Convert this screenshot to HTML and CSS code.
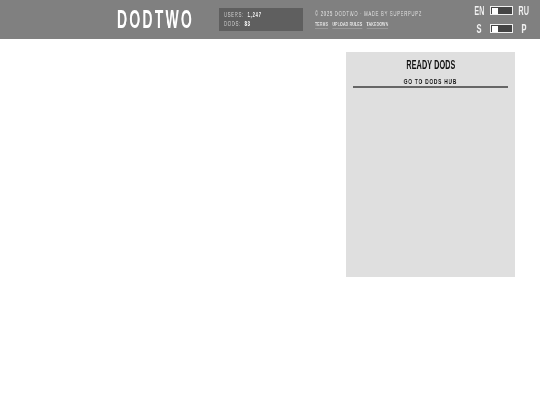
FILE: index.html
```html
<!DOCTYPE html>
<html lang="en">
<head>
  <meta charset="UTF-8">
  <title>DodTwo</title>
  <link rel="stylesheet" href="styles.css">
</head>
<body>

  <!-- Top bar -->
  <header class="topbar">
    <div class="logo"><span class="narrow">DODTWO</span></div>

    <div class="stats">
      <div class="narrow stats-lines">
        <div class="stat"><span class="stat-label">USERS:</span> <span class="stat-value">1,247</span></div>
        <div class="stat"><span class="stat-label">DODS:</span> <span class="stat-value">83</span></div>
      </div>
    </div>

    <div class="info">
      <div class="narrow">
        <div class="copyright">© 2025 DODTWO · MADE BY SUPERPUPZ</div>
        <div class="links">
          <a href="#">TERMS</a>
          <a href="#">UPLOAD RULES</a>
          <a href="#">TAKEDOWN</a>
        </div>
      </div>
    </div>

    <div class="switches">
      <div class="switch-row">
        <span class="switch-label"><span class="narrow">EN</span></span>
        <span class="switch"><span class="knob"></span></span>
        <span class="switch-label"><span class="narrow">RU</span></span>
      </div>
      <div class="switch-row">
        <span class="switch-label"><span class="narrow">S</span></span>
        <span class="switch"><span class="knob"></span></span>
        <span class="switch-label"><span class="narrow">P</span></span>
      </div>
    </div>
  </header>

  <!-- Ready dods -->
  <main class="content">
    <aside class="panel">
      <h2><span class="narrow">READY DODS</span></h2>
      <a class="hub-link" href="#"><span class="narrow">GO TO DODS HUB</span></a>
    </aside>
  </main>

</body>
</html>
```

FILE: styles.css
```css
body {
  margin: 0;
  background: #fff;
  font-family: "Liberation Sans", Arial, sans-serif;
  font-weight: bold;
}

a {
  color: inherit;
  text-decoration: none;
}

/* no condensed font installed, so squeeze the text */
.narrow {
  display: inline-block;
  white-space: nowrap;
  transform: scaleX(0.6);
  transform-origin: left center;
  will-change: transform;
}

.topbar {
  display: flex;
  align-items: center;
  height: 39px;
  background: #808080;
  color: #fff;
}

.logo {
  margin-left: 117px;
  width: 102px;
  overflow: hidden;
  font-size: 26px;
  letter-spacing: 4px;
}

.logo .narrow {
  transform: scaleX(0.54);
}

.stats {
  display: flex;
  align-items: center;
  box-sizing: border-box;
  width: 84px;
  height: 23px;
  padding-left: 5px;
  overflow: hidden;
  background: #5f5f5f;
  font-size: 7px;
  line-height: 8px;
  letter-spacing: 1.2px;
}

.stats-lines {
  display: flex;
  flex-direction: column;
  gap: 1px;
}

.stat {
  display: flex;
  gap: 6px;
}

.stat-label {
  color: #d0d0d0;
  font-weight: normal;
}

.info {
  margin-left: 12px;
  width: 158px;
  overflow: hidden;
}

.copyright {
  color: #e0e0e0;
  font-size: 7px;
  font-weight: normal;
  letter-spacing: 1.2px;
}

.links {
  display: flex;
  gap: 7px;
  margin-top: 4px;
  color: #e4e4e4;
  font-size: 6px;
  letter-spacing: 0.2px;
}

.links a {
  padding-bottom: 1px;
  border-bottom: 1px solid #999;
}

.switches {
  display: flex;
  flex-direction: column;
  gap: 9px;
}

.switch-row {
  display: flex;
  align-items: center;
  justify-content: space-between;
  width: 57px;
  height: 9px;
}

.switch-label {
  display: flex;
  justify-content: center;
  width: 12px;
  font-size: 12px;
  color: #f2f2f2;
}

.switch-label .narrow {
  transform-origin: center;
}

.switch {
  display: flex;
  align-items: center;
  box-sizing: border-box;
  width: 23px;
  height: 9px;
  padding-left: 1px;
  border: 1px solid #f0f0f0;
  background: #444;
}

.knob {
  width: 6px;
  height: 6px;
  background: #fff;
}

.content {
  display: flex;
  justify-content: flex-end;
  padding: 13px 25px 0 0;
}

.panel {
  box-sizing: border-box;
  width: 169px;
  height: 225px;
  padding: 7px 7px 0;
  background: #dfdfdf;
  color: #111;
  text-align: center;
}

.panel .narrow {
  transform-origin: center;
}

.panel h2 {
  margin: 0;
  font-size: 12px;
  line-height: 13px;
  letter-spacing: 0.2px;
}

.hub-link {
  display: block;
  margin-top: 5px;
  border-bottom: 2px solid #666;
  font-size: 8px;
  line-height: 9px;
  letter-spacing: 1.3px;
}
```
